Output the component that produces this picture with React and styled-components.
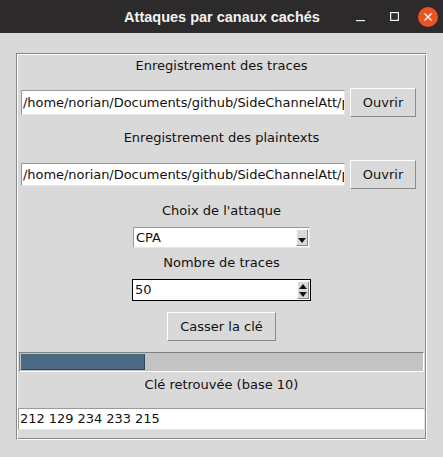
import React from "react";
import styled, { createGlobalStyle } from "styled-components";

const Global = createGlobalStyle`
    html, body {
        margin: 0;
        padding: 0;
        background: #d9d9d9;
    }
    body {
        font-family: "DejaVu Sans", "Liberation Sans", sans-serif;
        font-size: 13px;
        color: #111;
    }
`;

const Ventana = styled.div`
    width: 443px;
    height: 457px;
    background: #d9d9d9;
    display: flex;
    flex-direction: column;
    overflow: hidden;
`;

const BarraTitulo = styled.div`
    height: 33px;
    background: #2c2a2a;
    display: grid;
    grid-template-columns: 1fr auto 1fr;
    align-items: center;
    flex-shrink: 0;
`;

const Titulo = styled.div`
    grid-column: 2;
    color: #f2f2f2;
    font-family: "Liberation Sans", "DejaVu Sans", sans-serif;
    font-weight: bold;
    font-size: 14.5px;
    padding-left: 1px;
`;

const Controles = styled.div`
    grid-column: 3;
    justify-self: end;
    display: flex;
    align-items: center;
    padding-right: 5px;
`;

const BotonVentana = styled.div`
    width: 20px;
    height: 20px;
    margin-right: ${(p) => p.separacion || 0}px;
    display: flex;
    align-items: center;
    justify-content: center;
`;

const Cerrar = styled.div`
    width: 20px;
    height: 20px;
    border-radius: 50%;
    background: #e95420;
    display: flex;
    align-items: center;
    justify-content: center;
`;

const Marco = styled.div`
    margin: 20px 16px 0 16px;
    height: 387px;
    box-sizing: border-box;
    border: 1px solid;
    border-color: #888 #fff #fff #888;
    box-shadow: inset 1px 1px 0 #fff, inset -1px -1px 0 #888;
    padding: 2px 2px 0 2px;
    display: flex;
    flex-direction: column;
    align-items: center;
`;

const Etiqueta = styled.div`
    height: 16px;
    line-height: 16px;
    margin-top: ${(p) => p.arriba}px;
    text-align: center;
`;

const Fila = styled.div`
    align-self: stretch;
    display: flex;
    align-items: center;
    gap: 5px;
    padding-left: 2px;
    margin-top: ${(p) => p.arriba}px;
    height: 29px;
`;

const Entrada = styled.div`
    box-sizing: border-box;
    width: ${(p) => p.ancho}px;
    height: ${(p) => p.alto || 22}px;
    background: #fff;
    border: 1px solid;
    border-color: #9a9a9a #e6e6e6 #e6e6e6 #9a9a9a;
    padding-left: 1px;
    letter-spacing: -0.05px;
    line-height: ${(p) => (p.alto || 22) - 2}px;
    white-space: nowrap;
    overflow: hidden;
    margin-top: ${(p) => p.arriba || 0}px;
    align-self: ${(p) => (p.estirar ? "stretch" : "auto")};
    margin-left: ${(p) => (p.estirar ? "-1px" : "0")};
    margin-right: ${(p) => (p.estirar ? "-1px" : "0")};
`;

const Boton = styled.div`
    box-sizing: border-box;
    width: ${(p) => p.ancho}px;
    height: 29px;
    background: #d9d9d9;
    border: 1px solid;
    border-color: #fff #8a8a8a #8a8a8a #fff;
    display: flex;
    align-items: center;
    justify-content: center;
    margin-top: ${(p) => p.arriba || 0}px;
`;

const Selector = styled.div`
    box-sizing: border-box;
    width: ${(p) => p.ancho}px;
    height: ${(p) => p.alto}px;
    margin-top: ${(p) => p.arriba}px;
    background: #fff;
    border: 1px solid;
    border-color: ${(p) => (p.foco ? "#000" : "#9a9a9a #e6e6e6 #e6e6e6 #9a9a9a")};
    display: flex;
    align-items: stretch;
    padding-left: 2px;
`;

const TextoSelector = styled.div`
    flex: 1;
    line-height: ${(p) => p.alto - 2}px;
`;

const Flecha = styled.div`
    width: 12px;
    margin: 1px;
    background: #d9d9d9;
    border: 1px solid;
    border-color: #fff #8a8a8a #8a8a8a #fff;
    box-sizing: border-box;
    display: flex;
    flex-direction: column;
    align-items: center;
    justify-content: ${(p) => (p.doble ? "space-around" : "flex-end")};
    padding-bottom: ${(p) => (p.doble ? 0 : 2)}px;
`;

const Progreso = styled.div`
    box-sizing: border-box;
    align-self: stretch;
    margin: ${(p) => p.arriba}px 0 0 0;
    height: 20px;
    background: #c3c3c3;
    border: 1px solid;
    border-color: #7f7f7f #fff #fff #7f7f7f;
    padding: 1px;
    display: flex;
`;

const Relleno = styled.div`
    height: 100%;
    background: #4a6984;
    border-right: 1px solid #2f4a60;
    border-bottom: 1px solid #2f4a60;
    box-sizing: border-box;
`;

const Triangulo = ({ arriba }) => (
    <svg width="8" height="5" viewBox="0 0 8 5">
        <polygon points={arriba ? "0,5 8,5 4,0" : "0,0 8,0 4,5"} fill="#111" />
    </svg>
);

const App = () => {
    const ruta = "/home/norian/Documents/github/SideChannelAtt/p";
    const avance = 31;

    return (
        <>
            <Global />
            <Ventana>
                <BarraTitulo>
                    <Titulo>Attaques par canaux cachés</Titulo>
                    <Controles>
                        <BotonVentana separacion={14}>
                            <svg width="9" height="10" viewBox="0 0 9 10">
                                <rect x="0" y="8" width="9" height="1.2" fill="#eee" />
                            </svg>
                        </BotonVentana>
                        <BotonVentana separacion={14}>
                            <svg width="9" height="9" viewBox="0 0 9 9">
                                <rect x="0.6" y="0.6" width="7.8" height="7.8" fill="none" stroke="#eee" strokeWidth="1.2" />
                            </svg>
                        </BotonVentana>
                        <Cerrar>
                            <svg width="8" height="8" viewBox="0 0 8 8">
                                <path d="M0.5 0.5 L7.5 7.5 M7.5 0.5 L0.5 7.5" stroke="#fff" strokeWidth="1.4" />
                            </svg>
                        </Cerrar>
                    </Controles>
                </BarraTitulo>

                <Marco>
                    <Etiqueta arriba={2}>Enregistrement des traces</Etiqueta>
                    <Fila arriba={14}>
                        <Entrada ancho={324} alto={25}>{ruta}</Entrada>
                        <Boton ancho={66}>Ouvrir</Boton>
                    </Fila>

                    <Etiqueta arriba={13}>Enregistrement des plaintexts</Etiqueta>
                    <Fila arriba={14}>
                        <Entrada ancho={324} alto={23}>{ruta}</Entrada>
                        <Boton ancho={66}>Ouvrir</Boton>
                    </Fila>

                    <Etiqueta arriba={14}>Choix de l'attaque</Etiqueta>
                    <Selector ancho={177} alto={21} arriba={8}>
                        <TextoSelector alto={21}>CPA</TextoSelector>
                        <Flecha>
                            <Triangulo />
                        </Flecha>
                    </Selector>

                    <Etiqueta arriba={7}>Nombre de traces</Etiqueta>
                    <Selector ancho={179} alto={22} arriba={8} foco>
                        <TextoSelector alto={22}>50</TextoSelector>
                        <Flecha doble>
                            <Triangulo arriba />
                            <Triangulo />
                        </Flecha>
                    </Selector>

                    <Boton ancho={109} arriba={11}>Casser la clé</Boton>

                    <Progreso arriba={11}>
                        <Relleno style={{ width: `${avance}%` }} />
                    </Progreso>

                    <Etiqueta arriba={5}>Clé retrouvée (base 10)</Etiqueta>
                    <Entrada arriba={15} alto={22} estirar>212 129 234 233 215</Entrada>
                </Marco>
            </Ventana>
        </>
    );
};

export default App;
